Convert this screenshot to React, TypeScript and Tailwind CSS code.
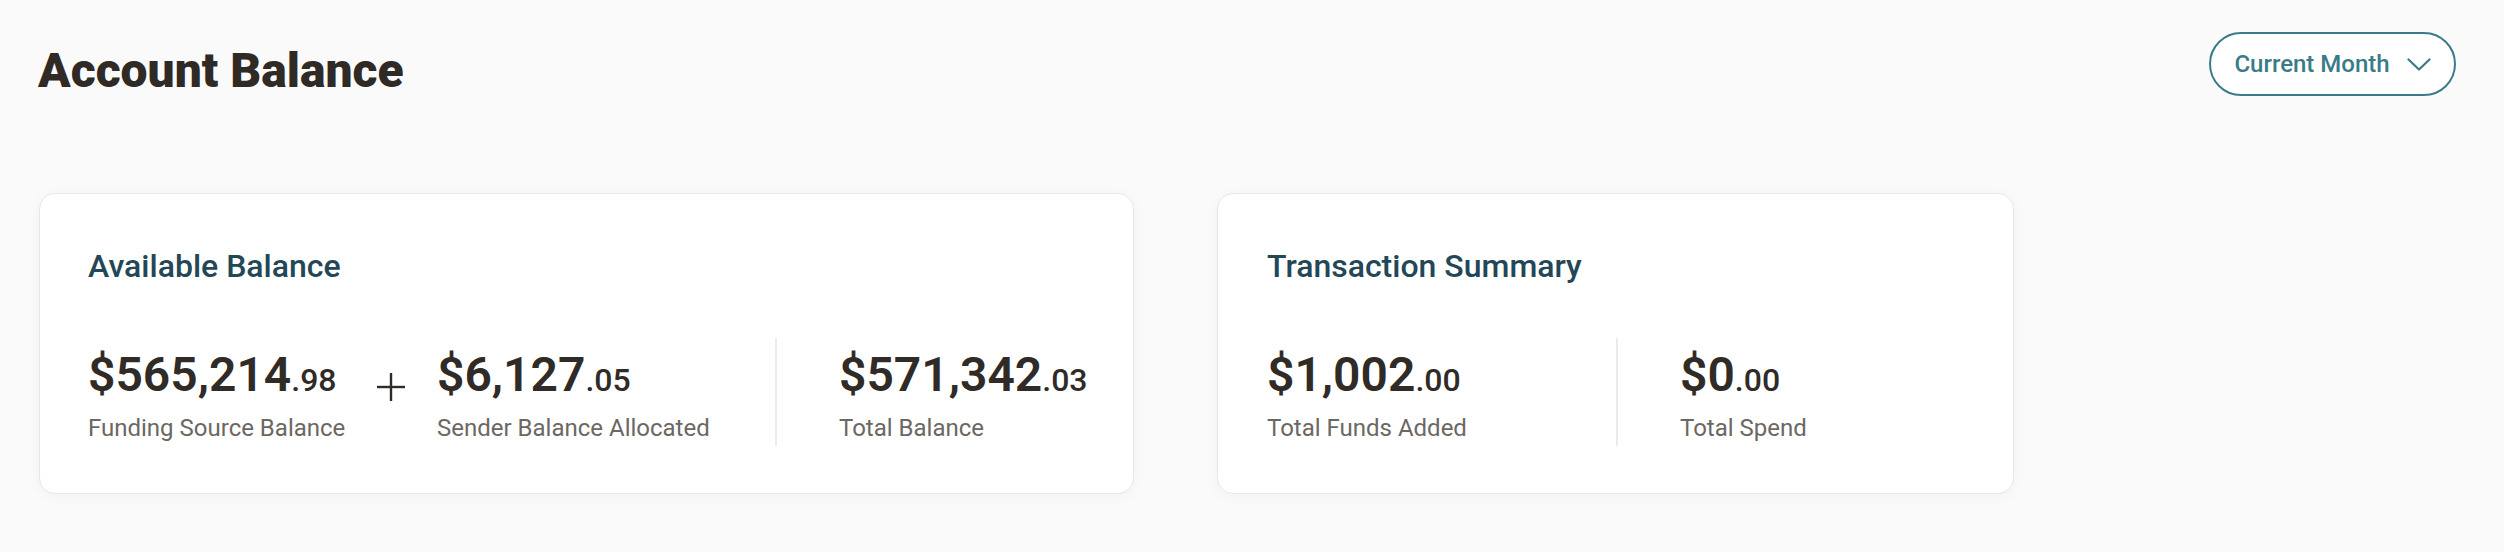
import React from "react";

function Amount({ whole, cents }: { whole: string; cents: string }) {
  return (
    <div className="text-[48px] leading-none font-semibold text-[#302b27] whitespace-nowrap">
      {whole}
      <span className="text-[32px] leading-none font-medium">.{cents}</span>
    </div>
  );
}

function Stat({ whole, cents, label, className }: { whole: string; cents: string; label: string; className: string }) {
  return (
    <div className={"flex flex-col " + className}>
      <Amount whole={whole} cents={cents} />
      <div className="mt-[17px] text-[24px] leading-none text-[#6b6763] whitespace-nowrap">{label}</div>
    </div>
  );
}

function Divider() {
  return <div className="w-[2px] h-[108px] mt-[-13px] bg-[#ebebeb] shrink-0" />;
}

export default function App() {
  return (
    <div className="w-[2504px] min-h-[552px] bg-[#fafafa] font-['Roboto','Liberation_Sans',sans-serif]">
      <div className="flex items-start justify-between pl-[38px] pr-[48px] pt-[32px]">
        <h1 className="mt-[15px] text-[48px] leading-none font-black text-[#2f2a26]">Account Balance</h1>
        <button className="flex h-[64px] w-[247px] items-center justify-center gap-[17px] rounded-full border-2 border-[#3a7b87] bg-white text-[24px] font-medium leading-none text-[#3a7b87]">
          <span>Current Month</span>
          <svg width="24" height="13" viewBox="0 0 24 13" fill="none">
            <polyline points="1.5,1.5 12,11.5 22.5,1.5" stroke="#3a7b87" strokeWidth="2.2" strokeLinecap="round" strokeLinejoin="round" />
          </svg>
        </button>
      </div>

      <div className="mt-[97px] flex gap-[83px] pl-[39px]">
        <div className="h-[301px] w-[1095px] rounded-[16px] border border-[#e8e8e8] bg-white pl-[48px] pt-[56px] shadow-[0_2px_14px_rgba(0,0,0,0.04)]">
          <h2 className="text-[32px] leading-none font-medium text-[#234757]">Available Balance</h2>
          <div className="mt-[69px] flex items-start">
            <Stat whole="$565,214" cents="98" label="Funding Source Balance" className="w-[289px] shrink-0" />
            <div className="mt-[22px] w-[28px] shrink-0">
              <svg width="28" height="28" viewBox="0 0 28 28" fill="none">
                <line x1="14" y1="0" x2="14" y2="28" stroke="#302b27" strokeWidth="2.4" />
                <line x1="0" y1="14" x2="28" y2="14" stroke="#302b27" strokeWidth="2.4" />
              </svg>
            </div>
            <Stat whole="$6,127" cents="05" label="Sender Balance Allocated" className="ml-[32px] w-[338px] shrink-0" />
            <Divider />
            <Stat whole="$571,342" cents="03" label="Total Balance" className="ml-[62px]" />
          </div>
        </div>

        <div className="h-[301px] w-[797px] rounded-[16px] border border-[#e8e8e8] bg-white pl-[49px] pt-[56px] shadow-[0_2px_14px_rgba(0,0,0,0.04)]">
          <h2 className="text-[32px] leading-none font-medium text-[#234757]">Transaction Summary</h2>
          <div className="mt-[69px] flex items-start">
            <Stat whole="$1,002" cents="00" label="Total Funds Added" className="w-[349px] shrink-0" />
            <Divider />
            <Stat whole="$0" cents="00" label="Total Spend" className="ml-[62px]" />
          </div>
        </div>
      </div>
    </div>
  );
}
